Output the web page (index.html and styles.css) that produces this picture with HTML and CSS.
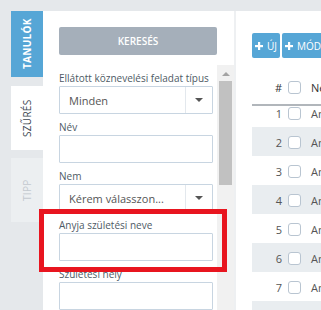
FILE: index.html
```html
<!DOCTYPE html>
<html lang="hu">
<head>
  <meta charset="UTF-8" />
  <title>Tanulók</title>
  <link rel="stylesheet" href="styles.css">
</head>
<body>

  <div class="topbar"></div>

  <div class="layout">

    <nav class="tabs">
      <div class="tab tab-main">TANULÓK</div>
      <div class="tab tab-current">SZŰRÉS</div>
      <div class="tab tab-off">TIPP</div>
    </nav>

    <aside class="filter">
      <button class="search-btn">KERESÉS</button>

      <div class="filter-scroll">
        <form class="filter-form">
          <div class="field">
            <label>Ellátott köznevelési feladat típus</label>
            <div class="select"><span>Minden</span><i class="caret"></i></div>
          </div>
          <div class="field">
            <label>Név</label>
            <input type="text" />
          </div>
          <div class="field">
            <label>Nem</label>
            <div class="select"><span>Kérem válasszon...</span><i class="caret"></i></div>
          </div>
          <div class="field">
            <label>Anyja születési neve</label>
            <input type="text" />
          </div>
          <div class="field">
            <label>Születési hely</label>
            <input type="text" />
          </div>
        </form>

        <div class="scrollbar">
          <span class="scroll-arrow"></span>
          <span class="scroll-thumb"></span>
        </div>
      </div>

      <!-- kiemelés -->
      <div class="highlight"></div>
    </aside>

    <main class="list">
      <div class="toolbar">
        <button class="tool-btn"><svg width="8" height="8" viewBox="0 0 8 8"><rect x="3" y="0" width="2.2" height="8" fill="#fff"/><rect x="0" y="3" width="8" height="2.2" fill="#fff"/></svg>ÚJ</button>
        <button class="tool-btn"><svg width="8" height="8" viewBox="0 0 8 8"><rect x="3" y="0" width="2.2" height="8" fill="#fff"/><rect x="0" y="3" width="8" height="2.2" fill="#fff"/></svg>MÓDOSÍTÁS</button>
      </div>

      <div class="thead">
        <span class="num">#</span>
        <span class="check"></span>
        <span class="name">Név</span>
      </div>

      <div class="tbody">
        <div class="rows">
          <div class="row"><span class="num">1</span><span class="check"></span><span class="name">Antal Bence</span></div>
          <div class="row"><span class="num">2</span><span class="check"></span><span class="name">Antal Dóra</span></div>
          <div class="row"><span class="num">3</span><span class="check"></span><span class="name">Antal Gergő</span></div>
          <div class="row"><span class="num">4</span><span class="check"></span><span class="name">Antal Lilla</span></div>
          <div class="row"><span class="num">5</span><span class="check"></span><span class="name">Antal Máté</span></div>
          <div class="row"><span class="num">6</span><span class="check"></span><span class="name">Antal Réka</span></div>
          <div class="row"><span class="num">7</span><span class="check"></span><span class="name">Antal Zsófia</span></div>
          <div class="row"><span class="num">8</span><span class="check"></span><span class="name">Antal Zoltán</span></div>
        </div>
      </div>
    </main>

  </div>

</body>
</html>
```

FILE: styles.css
```css
* {
  box-sizing: border-box;
}

html, body {
  margin: 0;
  height: 100%;
  overflow: hidden;
}

body {
  font-family: 'Open Sans', sans-serif;
  background: #e5e8eb;
  color: #4e5a65;
}

.topbar {
  height: 11px;
}

.layout {
  display: flex;
  height: calc(100% - 11px);
}

/* fülek */
.tabs {
  width: 43px;
  padding-left: 11px;
  display: flex;
  flex-direction: column;
  gap: 9px;
}

.tab {
  height: 64px;
  display: flex;
  align-items: center;
  justify-content: center;
  writing-mode: vertical-rl;
  transform: rotate(180deg);
  font-size: 10px;
  letter-spacing: 0.3px;
}

.tab-main {
  height: 66px;
  background: #56a6d6;
  color: #fff;
  font-weight: 700;
}

.tab-current {
  background: #fff;
  color: #3d4852;
}

.tab-off {
  margin-top: -1px;
  background: #eceff1;
  color: #c3c9cf;
}

/* szűrő panel */
.filter {
  position: relative;
  width: 191px;
  background: #fff;
  padding-top: 16px;
}

.search-btn {
  display: block;
  margin-left: 16px;
  width: 158px;
  height: 28px;
  border: none;
  border-radius: 2px;
  background: #a5afba;
  color: #fff;
  font-family: 'Open Sans', sans-serif;
  font-size: 10px;
  font-weight: 600;
}

.filter-scroll {
  display: flex;
  margin-top: 10px;
  height: 250px;
}

.filter-form {
  width: 174px;
  padding: 6px 4px 0 16px;
}

.field {
  margin-bottom: 6px;
}

.field label {
  display: block;
  font-size: 10px;
  line-height: 14px;
  margin-bottom: 1px;
  white-space: nowrap;
}

.field input[type="text"],
.select {
  display: block;
  width: 154px;
  height: 28px;
  border: 1px solid #c8d5e1;
  border-radius: 1px;
  background: #fff;
}

.select {
  display: flex;
  align-items: center;
  font-size: 11px;
  color: #555;
}

.select span {
  flex: 1;
  padding-left: 9px;
}

.caret {
  width: 27px;
  height: 100%;
  border-left: 1px solid #e3e8ed;
  display: flex;
  align-items: center;
  justify-content: center;
}

.caret::after {
  content: "";
  border-left: 4px solid transparent;
  border-right: 4px solid transparent;
  border-top: 4px solid #555;
}

.scrollbar {
  width: 17px;
  background: #f1f1f1;
  display: flex;
  flex-direction: column;
  align-items: center;
}

.scroll-arrow {
  margin-top: 7px;
  border-left: 4px solid transparent;
  border-right: 4px solid transparent;
  border-bottom: 4px solid #a3a3a3;
}

.scroll-thumb {
  margin-top: 5px;
  width: 13px;
  height: 104px;
  background: #c1c1c1;
}

.highlight {
  position: absolute;
  left: -4px;
  top: 198px;
  width: 188px;
  height: 63px;
  border: 5px solid #e8151f;
}

/* lista */
.list {
  flex: 1;
  background: #fff;
  border-left: 2px solid #eef0f2;
  padding: 22px 0 0 16px;
  overflow: hidden;
}

.toolbar {
  display: flex;
  gap: 2px;
}

.tool-btn {
  display: flex;
  align-items: center;
  gap: 4px;
  height: 25px;
  padding: 0 3px;
  border: none;
  border-radius: 2px;
  background: #56a6d6;
  color: #fff;
  font-family: 'Open Sans', sans-serif;
  font-size: 10px;
  white-space: nowrap;
}

.thead,
.row {
  display: flex;
  align-items: center;
  white-space: nowrap;
  width: 200px;
}

.thead {
  height: 48px;
  padding-top: 12px;
  border-bottom: 2px solid #b1b6bb;
  color: #333;
}

.num {
  width: 30px;
  text-align: right;
  font-size: 11px;
}

.check {
  width: 13px;
  height: 13px;
  margin-left: 6px;
  border: 1px solid #b9c5d1;
  border-radius: 3px;
  background: #fff;
  flex-shrink: 0;
}

.name {
  margin-left: 10px;
  font-size: 11px;
}

.tbody {
  overflow: hidden;
}

.rows {
  margin-top: -8px;
}

.row {
  height: 29px;
  padding-top: 2px;
  color: #555;
}

.row:nth-child(even) {
  background: #e9edf0;
}
```
